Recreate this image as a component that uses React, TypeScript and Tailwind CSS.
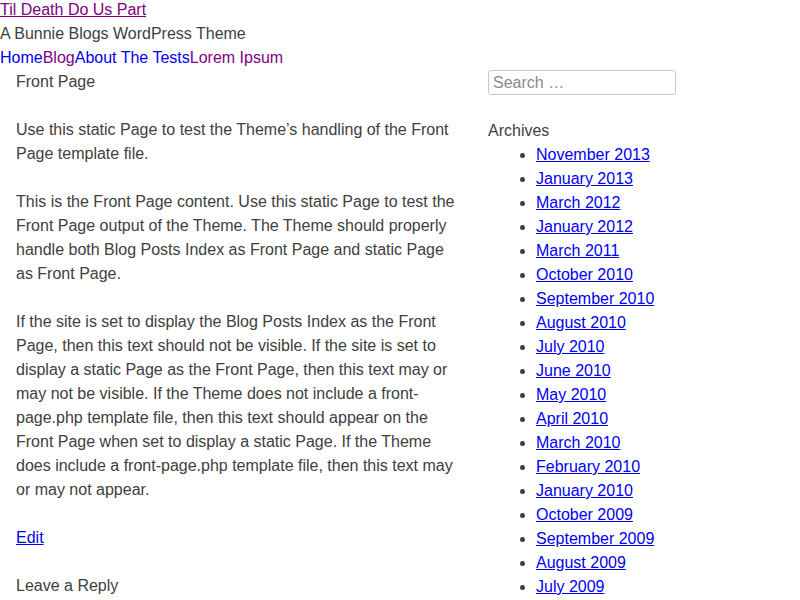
const archives = [
  'November 2013',
  'January 2013',
  'March 2012',
  'January 2012',
  'March 2011',
  'October 2010',
  'September 2010',
  'August 2010',
  'July 2010',
  'June 2010',
  'May 2010',
  'April 2010',
  'March 2010',
  'February 2010',
  'January 2010',
  'October 2009',
  'September 2009',
  'August 2009',
  'July 2009',
];

export default function App() {
  return (
    <div className="min-h-screen bg-white text-[16px] text-[#404040] font-['Liberation_Sans',Arial,sans-serif]">
      <header>
        <h1 className="leading-[19px]">
          <a href="#" className="text-[#800080] underline">Til Death Do Us Part</a>
        </h1>
        <p className="mt-[3px] leading-6">A Bunnie Blogs WordPress Theme</p>
        <nav className="flex leading-6">
          <a href="#" className="text-[#0000ee]">Home</a>
          <a href="#" className="text-[#800080]">Blog</a>
          <a href="#" className="text-[#0000ee]">About The Tests</a>
          <a href="#" className="text-[#800080]">Lorem Ipsum</a>
        </nav>
      </header>

      <div className="flex">
        <main className="ml-4 w-[440px] leading-6">
          <h2>Front Page</h2>
          <p className="mt-6">
            Use this static Page to test the Theme’s handling of the Front Page template file.
          </p>
          <p className="mt-6">
            This is the Front Page content. Use this static Page to test the Front Page output of the
            Theme. The Theme should properly handle both Blog Posts Index as Front Page and static Page
            as Front Page.
          </p>
          <p className="mt-6">
            If the site is set to display the Blog Posts Index as the Front Page, then this text should
            not be visible. If the site is set to display a static Page as the Front Page, then this
            text may or may not be visible. If the Theme does not include a front-page.php template
            file, then this text should appear on the Front Page when set to display a static Page. If
            the Theme does include a front-page.php template file, then this text may or may not appear.
          </p>
          <p className="mt-6">
            <a href="#" className="text-[#0000ee] underline">Edit</a>
          </p>
          <h3 className="mt-6">Leave a Reply</h3>
        </main>

        <aside className="ml-8 w-[300px] leading-6">
          <div className="w-[188px] h-[25px] rounded-[3px] border border-[#c8c8c8] px-1 flex items-center text-[#8a8a8a]">
            Search …
          </div>
          <h2 className="mt-6">Archives</h2>
          <ul className="list-disc pl-12 marker:text-[#404040]">
            {archives.map((m) => (
              <li key={m}>
                <a href="#" className="text-[#0000ee] underline">{m}</a>
              </li>
            ))}
          </ul>
        </aside>
      </div>
    </div>
  );
}
